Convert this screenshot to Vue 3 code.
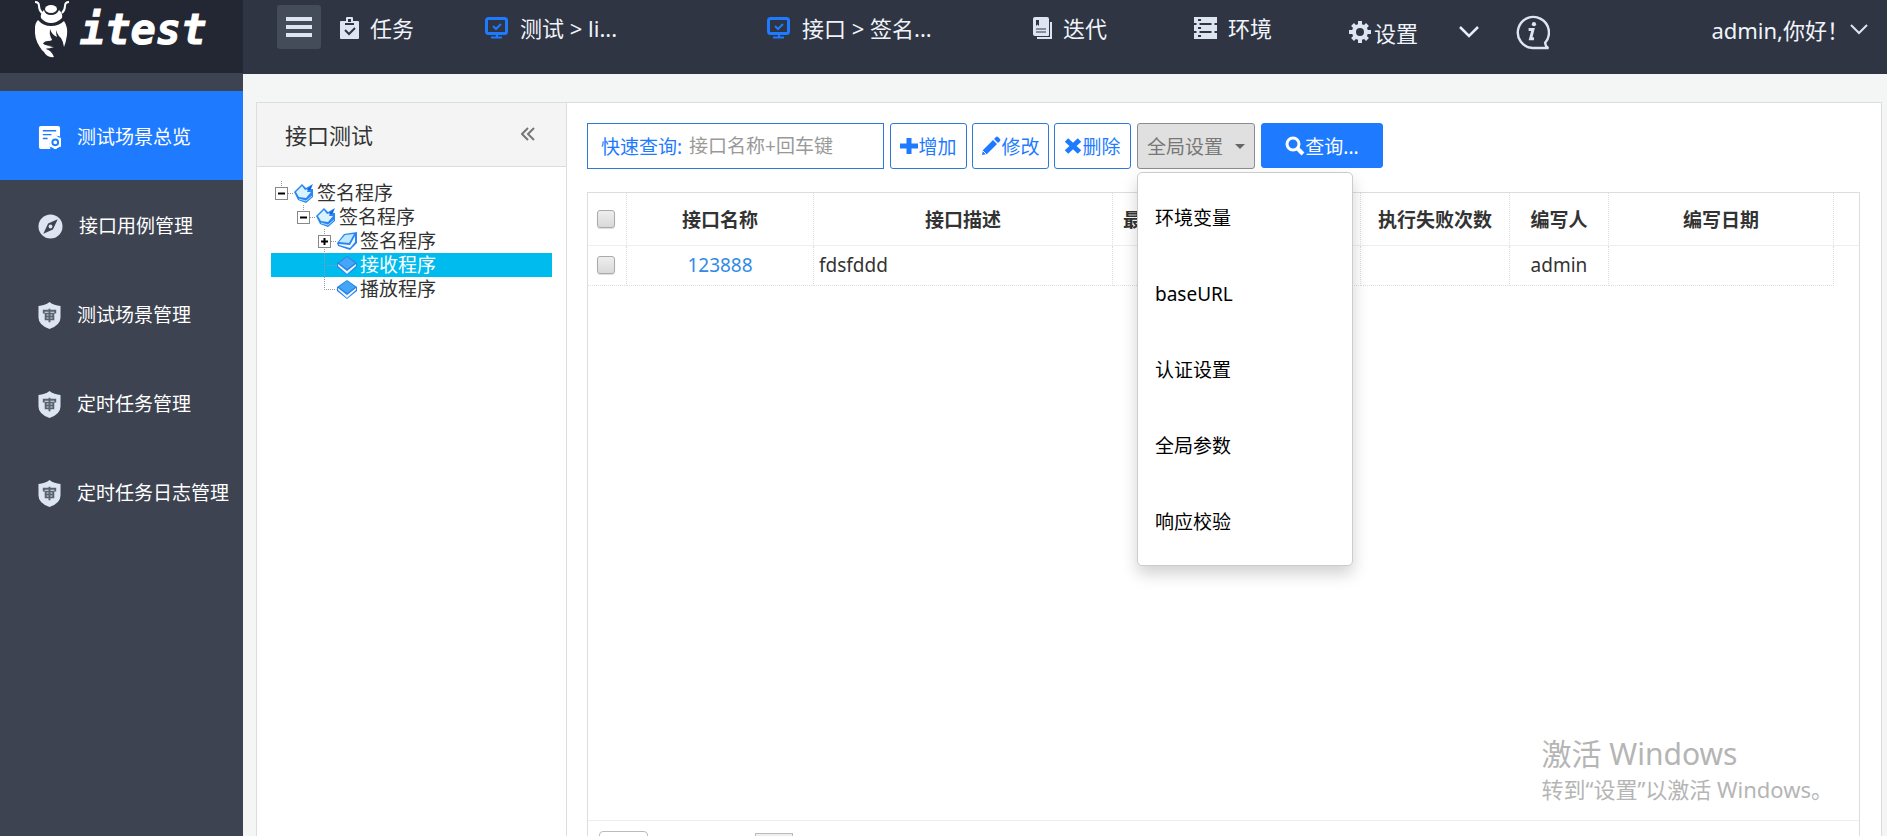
<script setup>
import { ref } from 'vue'

const menu = [
  { label: '测试场景总览', icon: 'doc', active: true },
  { label: '接口用例管理', icon: 'compass' },
  { label: '测试场景管理', icon: 'shield' },
  { label: '定时任务管理', icon: 'shield' },
  { label: '定时任务日志管理', icon: 'shield' },
]

const tree = [
  { label: '签名程序', level: 0, icon: 'open', toggle: '-' },
  { label: '签名程序', level: 1, icon: 'open', toggle: '-' },
  { label: '签名程序', level: 2, icon: 'closed', toggle: '+' },
  { label: '接收程序', level: 2, icon: 'leaf', selected: true },
  { label: '播放程序', level: 2, icon: 'leaf', last: true },
]

const settings = ['环境变量', 'baseURL', '认证设置', '全局参数', '响应校验']
const rows = [{ name: '123888', desc: 'fdsfddd', author: 'admin' }]
const keyword = ref('')
</script>

<template>
  <div class="app">
    <aside class="side">
      <a class="brand" href="#" aria-label="itest">
        <svg class="bug" viewBox="0 0 36 58" aria-hidden="true">
          <path d="M1 2q4 0 4 4t3 7M35 2q-4 0-4 4t-3 7" fill="none" stroke="#fff" stroke-width="2" />
          <ellipse cx="17" cy="9" rx="6" ry="4" fill="#fff" />
          <path d="M10 10q-4 3-3 8 4 5 10 5t11-5q1-5-3-8-2 5-8 5t-7-5z" fill="#fff" />
          <path d="M4 20q5 6 13 6 8 0 13-5 4 6 3 14-1 7-3 12-1-6-3-9-3-2-5-8 0 4 1 7-5-2-7-8-1 5 1 9 3 3-3 3-4 0-5 3 4 3 11 3-9 3-14 0Q0 39 1 28q0-5 3-8z" fill="#fff" />
          <path d="M4 41q6 5 14 5-5 1-6 3 5 1 8 8-7 1-10-5-5-4-6-11z" fill="#fff" />
        </svg>
        <span class="brand-name">itest</span>
      </a>
      <nav class="menu">
        <a v-for="m in menu" :key="m.label" href="#" class="menu-item" :class="{ active: m.active }">
          <svg v-if="m.icon === 'doc'" class="menu-icon" viewBox="0 0 24 26" aria-hidden="true">
            <path d="M3 1h18a2 2 0 0 1 2 2v9a8 8 0 0 0-11 9l1 4H3a2 2 0 0 1-2-2V3a2 2 0 0 1 2-2z" fill="#fff" />
            <path d="M5 6h14M5 10h9M5 14h5" stroke="#1e7bff" stroke-width="1.500" />
            <circle cx="18" cy="18" r="5" fill="none" stroke="#fff" stroke-width="3" />
            <path d="M18 11v14M12 14l12 8M12 22l12-8" stroke="#fff" stroke-width="3" />
            <circle cx="18" cy="18" r="3" fill="#fff" stroke="#1e7bff" stroke-width="2" />
          </svg>
          <svg v-else-if="m.icon === 'compass'" class="menu-icon wide" viewBox="0 0 26 26" aria-hidden="true">
            <circle cx="13" cy="13" r="12.500" fill="#dce5f0" />
            <path d="M20.500 5.500L15.500 16 5.500 20.500 10.500 10z" fill="#3d4350" />
            <circle cx="13" cy="13" r="2" fill="#dce5f0" />
          </svg>
          <svg v-else class="menu-icon" viewBox="0 0 24 28" aria-hidden="true">
            <path d="M12 0q5 4 11.500 4v12q0 8-11.500 12Q.500 24 .500 16V4Q7 4 12 0z" fill="#dce5f0" />
            <path d="M6 12V9h12v3M12 7v14M8 12h8v6H8zM8 15h8" fill="none" stroke="#596271" stroke-width="2" />
          </svg>
          <span>{{ m.label }}</span>
        </a>
      </nav>
    </aside>

    <div class="main">
      <header class="top">
        <button class="burger" type="button" aria-label="菜单"><i></i><i></i><i></i></button>
        <nav class="nav">
          <a href="#" class="nav-item task">
            <svg width="19" height="22" viewBox="0 0 19 22" aria-hidden="true">
              <path d="M1 4h5V1q0-1 1-1h5q1 0 1 1v3h5q1 0 1 1v16q0 1-1 1H1q-1 0-1-1V5q0-1 1-1z" fill="#dce5f0" />
              <path d="M8 2h3v3H8z" fill="#2f3543" />
              <path d="M5 7h9M5 13l4 4 6-6" fill="none" stroke="#2f3543" stroke-width="2" />
            </svg>
            <span>任务</span>
          </a>
          <a href="#" class="nav-item test">
            <svg width="24" height="22" viewBox="0 0 24 22" aria-hidden="true">
              <rect x="1.500" y="1.500" width="20" height="15" rx="2" fill="none" stroke="#1e7bff" stroke-width="3" />
              <path d="M6 20.500h11M12 17v3M8 9l3 3 5-5" fill="none" stroke="#1e7bff" stroke-width="2" />
            </svg>
            <span>测试 &gt; li...</span>
          </a>
          <a href="#" class="nav-item api">
            <svg width="24" height="22" viewBox="0 0 24 22" aria-hidden="true">
              <rect x="1.500" y="1.500" width="20" height="15" rx="2" fill="none" stroke="#1e7bff" stroke-width="3" />
              <path d="M6 20.500h11M12 17v3M8 9l3 3 5-5" fill="none" stroke="#1e7bff" stroke-width="2" />
            </svg>
            <span>接口 &gt; 签名...</span>
          </a>
          <a href="#" class="nav-item iter">
            <svg width="19" height="22" viewBox="0 0 19 22" aria-hidden="true">
              <path d="M2 0h12q2 0 2 2v16q0 1-1 1H2q-2 0-2-2V2q0-2 2-2z" fill="#dce5f0" />
              <path d="M18 5v16H4" fill="none" stroke="#dce5f0" stroke-width="2" />
              <path d="M3 3h3v6L4.500 7.500 3 9z" fill="#2f3543" />
              <path d="M3 12h10M3 15h10" fill="none" stroke="#2f3543" stroke-width="1" />
            </svg>
            <span>迭代</span>
          </a>
          <a href="#" class="nav-item env">
            <svg width="23" height="22" viewBox="0 0 23 22" aria-hidden="true">
              <path d="M0 0h23v6H0zM0 8h23v6H0zM0 16h23v6H0z" fill="#dce5f0" />
              <path d="M4 6v2M19 6v2M4 14v2M19 14v2" stroke="#dce5f0" stroke-width="3" />
              <path d="M4 3h3M4 11h3M4 19h3" stroke="#2f3543" stroke-width="2" />
            </svg>
            <span>环境</span>
          </a>
        </nav>
        <div class="tools">
          <a href="#" class="nav-item set">
            <svg width="22" height="22" viewBox="0 0 22 22" aria-hidden="true">
              <circle cx="11" cy="11" r="6" fill="none" stroke="#dce5f0" stroke-width="4" />
              <path d="M11 0v4M11 18v4M0 11h4M18 11h4M3.500 3.500l3 3M15.500 15.500l3 3M18.500 3.500l-3 3M6.500 15.500l-3 3" stroke="#dce5f0" stroke-width="4" />
            </svg>
            <span>设置</span>
          </a>
          <button class="icon-btn more" type="button" aria-label="更多">
            <svg width="20" height="12" viewBox="0 0 20 12"><path d="M1 1l9 9 9-9" fill="none" stroke="#e8eef5" stroke-width="2.500" /></svg>
          </button>
          <button class="icon-btn" type="button" aria-label="帮助">
            <svg width="35" height="36" viewBox="0 0 36 36">
              <path d="M31 29a16 16 0 1 0-13 5.500h16.500q-3-1-3.500-5.500z" fill="none" stroke="#dce5f0" stroke-width="2.500" />
              <circle cx="19.500" cy="10" r="2.200" fill="#dce5f0" />
              <path d="M14 15.500h4.500l-2.500 9.500h3.500" fill="none" stroke="#dce5f0" stroke-width="3" />
            </svg>
          </button>
        </div>
        <button class="user" type="button">
          <span>admin,你好！</span>
          <svg width="18" height="11" viewBox="0 0 18 11" aria-hidden="true"><path d="M1 1l8 8 8-8" fill="none" stroke="#dce5f0" stroke-width="2" /></svg>
        </button>
      </header>

      <main class="work">
        <section class="tree-panel">
          <div class="tree-head">
            <h2>接口测试</h2>
            <button class="icon-btn" type="button" aria-label="收起">
              <svg width="14" height="14" viewBox="0 0 14 14"><path d="M7 1L1 7l6 6M13 1L7 7l6 6" fill="none" stroke="#777" stroke-width="2" /></svg>
            </button>
          </div>
          <ul class="tree">
            <li v-for="(n, i) in tree" :key="i" :class="['node', 'lv' + n.level, { selected: n.selected }]">
              <svg class="joint" viewBox="0 0 20 24" aria-hidden="true">
                <template v-if="n.toggle">
                  <path d="M7.500 0v6M14 12.500h6" stroke="#999" stroke-dasharray="1 1" />
                  <path v-if="n.toggle === '+'" d="M7.500 18v6" stroke="#999" stroke-dasharray="1 1" />
                  <rect x="1.500" y="6.500" width="12" height="12" fill="#fff" stroke="#888" />
                  <path d="M4 12.500h7" stroke="#000" stroke-width="2" />
                  <path v-if="n.toggle === '+'" d="M7.500 9v7" stroke="#000" stroke-width="2" />
                </template>
                <path v-else :d="n.last ? 'M7.500 0v12.500h12' : 'M7.500 0v24M7 12.500h13'" fill="none" stroke="#999" stroke-dasharray="1 1" />
              </svg>
              <svg class="book" viewBox="0 0 20 20" aria-hidden="true">
                <template v-if="n.icon === 'open'">
                  <path d="M0 9L8 1l4 4 7-4-2 5 2 0v8l-7 6-8-3z" fill="#2b86f0" />
                  <path d="M2 9l6-6 3 4 3-1-1 3 4 0-5 6-7-1z" fill="#d9f3ff" />
                  <path d="M13 7l5-5-2 5z" fill="#0a5fd8" />
                  <path d="M5 16l7 2 6-5" fill="none" stroke="#a5dcff" />
                </template>
                <template v-else-if="n.icon === 'closed'">
                  <path d="M0 12L7 3l13-2v11l-7 7-12-4z" fill="#2b86f0" />
                  <path d="M2 11l6-7 9-1-5 9z" fill="#bfe8ff" />
                  <path d="M2 13l11 1 5-9v6l-5 6-11-3z" fill="#f2fbff" />
                </template>
                <template v-else>
                  <path d="M0 8l10-7 10 7v4l-10 8L0 12z" fill="#2a83e8" />
                  <path d="M1 9l9 7 9-7v2l-9 8-9-8z" fill="#e9f6ff" />
                  <path d="M2 8l8-6 8 6-8 6z" fill="#45a6f7" />
                </template>
              </svg>
              <span>{{ n.label }}</span>
            </li>
          </ul>
        </section>

        <section class="content">
          <div class="bar">
            <div class="quick">
              <label for="quick">快速查询:</label>
              <input id="quick" v-model="keyword" type="text" placeholder="接口名称+回车键" />
            </div>
            <button class="btn" type="button">
              <svg width="18" height="18" viewBox="0 0 18 18" aria-hidden="true"><path d="M6.500 1h5v5.500H18v5h-6.500V17h-5v-5.500H0v-5h6.500z" fill="#1e7bff" /></svg>增加
            </button>
            <button class="btn" type="button">
              <svg width="20" height="20" viewBox="0 0 20 20" aria-hidden="true"><path d="M1 19l1-5L12 4l4 4L6 18zM13 3l2-2q1-1 2 0l2 2q1 1 0 2l-2 2z" fill="#1e7bff" /><path d="M2 15l3 3" stroke="#fff" /></svg>修改
            </button>
            <button class="btn" type="button">
              <svg width="18" height="18" viewBox="0 0 18 18" aria-hidden="true"><path d="M2.500 3l13 12M15.500 3l-13 12" stroke="#1e7bff" stroke-width="5" /></svg>删除
            </button>
            <div class="drop">
              <button class="btn grey" type="button" aria-haspopup="true" aria-expanded="true">全局设置<i class="caret"></i></button>
              <ul class="drop-menu">
                <li v-for="s in settings" :key="s"><a href="#">{{ s }}</a></li>
              </ul>
            </div>
            <button class="btn primary" type="button">
              <svg width="20" height="20" viewBox="0 0 20 20" aria-hidden="true"><circle cx="8" cy="8" r="6" fill="none" stroke="#fff" stroke-width="3" /><path d="M12 12l6 6" stroke="#fff" stroke-width="4" /></svg>查询...
            </button>
          </div>

          <div class="grid">
            <div class="grid-body">
              <table>
                <colgroup>
                  <col class="c-check" /><col class="c-name" /><col class="c-desc" /><col class="c-last" />
                  <col class="c-fail" /><col class="c-author" /><col class="c-date" /><col />
                </colgroup>
                <thead>
                  <tr>
                    <th><input type="checkbox" aria-label="全选" /></th>
                    <th>接口名称</th>
                    <th>接口描述</th>
                    <th class="left">最</th>
                    <th>执行失败次数</th>
                    <th>编写人</th>
                    <th>编写日期</th>
                    <th></th>
                  </tr>
                </thead>
                <tbody>
                  <tr v-for="r in rows" :key="r.name">
                    <td><input type="checkbox" :aria-label="r.name" /></td>
                    <td><a href="#">{{ r.name }}</a></td>
                    <td class="desc">{{ r.desc }}</td>
                    <td></td>
                    <td></td>
                    <td>{{ r.author }}</td>
                    <td></td>
                    <td></td>
                  </tr>
                </tbody>
              </table>
            </div>
            <div class="pager">
              <select aria-label="每页条数"></select>
              <input type="text" aria-label="页码" />
            </div>
          </div>
        </section>
      </main>
    </div>

    <div class="watermark">
      <p class="wm-title">激活 Windows</p>
      <p class="wm-text">转到“设置”以激活 Windows。</p>
    </div>
  </div>
</template>

<style>
body {
  margin: 0;
  overflow: hidden;
}
</style>

<style scoped>
.app {
  position: relative;
  display: flex;
  height: 100vh;
  overflow: hidden;
  background: #f4f5f5;
  color: #333;
  font-family: "Noto Sans", "Noto Sans CJK SC", sans-serif;
  font-size: 19px;
  font-weight: 400;
}
.app *,
.app *::before {
  box-sizing: border-box;
}
a {
  color: inherit;
  text-decoration: none;
}
button,
input,
select {
  font: inherit;
}
button {
  border: 0;
  padding: 0;
  background: none;
  color: inherit;
  cursor: pointer;
}
svg {
  flex: none;
}

.side {
  flex: 0 0 243px;
  background: #3d4350;
}
.brand {
  display: flex;
  gap: 10px;
  height: 73px;
  padding-left: 34px;
  background: #232733;
  color: #fff;
}
.bug {
  width: 36px;
  height: 58px;
}
.brand-name {
  font: italic bold 42px/60px "DejaVu Sans Mono", monospace;
  -webkit-text-stroke: 1px #fff;
}
.menu {
  padding-top: 18px;
}
.menu-item {
  display: flex;
  align-items: center;
  gap: 16px;
  height: 89px;
  padding-left: 38px;
  color: #fff;
  white-space: nowrap;
}
.menu-item.active {
  background: #1e7bff;
}
.menu-icon {
  width: 23px;
  height: 27px;
  margin-top: 4px;
}
.menu-icon.wide {
  width: 25px;
}

.main {
  flex: 1;
  min-width: 0;
  display: flex;
  flex-direction: column;
}
.top {
  display: flex;
  align-items: flex-start;
  flex: 0 0 74px;
  padding: 0 19px 0 34px;
  background: #2f3543;
  color: #f0f4fa;
  font-size: 22px;
  white-space: nowrap;
}
.burger {
  display: flex;
  flex-direction: column;
  align-items: center;
  justify-content: center;
  gap: 4px;
  width: 44px;
  height: 44px;
  margin: 5px 19px 0 0;
  border-radius: 3px;
  background: #454c59;
}
.burger i {
  width: 26px;
  height: 4px;
  background: #dce5f0;
}
.nav,
.tools {
  display: flex;
  align-items: center;
  height: 56px;
}
.nav span {
  margin-top: -3px;
}
.tools {
  height: 64px;
}
.nav-item {
  display: flex;
  align-items: center;
  gap: 11px;
}
.task {
  width: 145px;
}
.test {
  width: 282px;
}
.api {
  width: 266px;
}
.iter {
  width: 161px;
}
.env {
  width: 155px;
}
.set {
  gap: 3px;
  width: 110px;
}
.icon-btn {
  display: flex;
}
.more {
  width: 56px;
}
.user {
  display: flex;
  align-items: center;
  gap: 1px;
  height: 58px;
  margin-left: auto;
}

.work {
  display: flex;
  flex: 1;
  min-height: 0;
  margin: 28px 5px -40px 13px;
  border: 1px solid #ddd;
  background: #fff;
}
.tree-panel {
  flex: 0 0 310px;
  border-right: 1px solid #ddd;
}
.tree-head {
  display: flex;
  align-items: center;
  justify-content: space-between;
  height: 64px;
  padding: 0 31px 2px 28px;
  border-bottom: 1px solid #ddd;
  background: #f4f4f4;
}
.tree-head h2 {
  margin: 0;
  font-size: 22px;
  font-weight: 400;
}
.tree {
  margin: 0;
  padding: 14px;
  list-style: none;
}
.node {
  display: flex;
  align-items: center;
  height: 24px;
  line-height: 24px;
  padding-left: 3px;
}
.node.lv1 {
  padding-left: 25px;
}
.node.lv2 {
  padding-left: 46px;
}
.node.selected {
  background: #00bbee;
  color: #fff;
}
.joint {
  width: 20px;
  height: 24px;
}
.book {
  width: 20px;
  height: 20px;
  margin-right: 3px;
}

.content {
  flex: 1;
  min-width: 0;
  display: flex;
  flex-direction: column;
  padding: 20px 21px 0 20px;
}
.bar {
  display: flex;
  gap: 5px;
  margin-bottom: 23px;
}
.quick {
  display: flex;
  align-items: center;
  gap: 7px;
  width: 297px;
  height: 46px;
  margin-right: 1px;
  padding: 0 13px;
  border: 1px solid #2b7bd6;
}
.quick label {
  color: #1e7bff;
  white-space: nowrap;
}
.quick input {
  flex: 1;
  min-width: 0;
  border: 0;
  padding: 0;
  outline: 0;
  background: none;
}
.quick input::placeholder {
  color: #999;
  opacity: 1;
}
.btn {
  display: flex;
  align-items: center;
  justify-content: center;
  width: 77px;
  height: 46px;
  border: 1px solid #2b7bd6;
  border-radius: 3px;
  background: #fff;
  color: #1e7bff;
  white-space: nowrap;
}
.btn.grey {
  gap: 12px;
  width: 118px;
  border-color: #8c8c8c;
  background: #e0e0e0;
  color: #777;
}
.caret {
  border: 5px solid transparent;
  border-top-color: #666;
  border-bottom: 0;
}
.btn.primary {
  width: 122px;
  height: 45px;
  border-color: #1e7bff;
  background: #1e7bff;
  color: #fff;
}
.drop {
  position: relative;
  margin: 0 1px;
}
.drop-menu {
  position: absolute;
  top: 49px;
  left: 0;
  z-index: 2;
  width: 216px;
  margin: 0;
  padding: 7px 0 5px;
  border: 1px solid #ccc;
  border-radius: 5px;
  background: #fff;
  box-shadow: 0 8px 16px rgba(0, 0, 0, 0.18);
  list-style: none;
}
.drop-menu a {
  display: block;
  padding: 0 17px;
  color: #000;
  line-height: 76px;
}

.grid {
  flex: 1;
  display: flex;
  flex-direction: column;
  border: 1px solid #ddd;
}
.grid-body {
  flex: 1;
}
table {
  width: 100%;
  table-layout: fixed;
  border-collapse: separate;
  border-spacing: 0;
}
.c-check {
  width: 39px;
}
.c-name {
  width: 187px;
}
.c-desc {
  width: 299px;
}
.c-last {
  width: 248px;
}
.c-fail {
  width: 149px;
}
.c-author {
  width: 99px;
}
.c-date {
  width: 225px;
}
th,
td {
  padding: 0;
  border-right: 1px dotted #ddd;
  text-align: center;
  white-space: nowrap;
}
th {
  height: 53px;
  border-bottom: 1px solid #eee;
  font-weight: 700;
}
td {
  height: 40px;
  padding-bottom: 2px;
  border-bottom: 1px dotted #ddd;
}
th:last-child {
  border-right: 0;
}
td:last-child {
  border: 0;
}
th.left {
  padding-left: 10px;
  text-align: left;
}
td.desc {
  padding-left: 5px;
  text-align: left;
}
td a {
  color: #2f8be6;
}
input[type="checkbox"] {
  display: block;
  width: 18px;
  height: 18px;
  margin: 0 9px;
  appearance: none;
  border: 1px solid #aaa;
  border-radius: 3px;
  background: linear-gradient(#eee, #d9d9d9);
  box-shadow: 0 1px 1px #ddd;
}
.pager {
  display: flex;
  align-items: flex-start;
  gap: 107px;
  height: 54px;
  padding: 10px 11px;
  border-top: 1px solid #eee;
}
.pager select {
  width: 49px;
  height: 34px;
  appearance: none;
  border: 1px solid #bbb;
  border-radius: 4px;
  background: #fff;
}
.pager input {
  width: 38px;
  height: 30px;
  margin-top: 2px;
  border: 1px solid #bbb;
  background: #eee;
}

.watermark {
  position: absolute;
  right: 54px;
  bottom: 31px;
  z-index: 3;
  color: #b5b5b5;
  pointer-events: none;
}
.watermark p {
  margin: 0;
  white-space: nowrap;
}
.wm-title {
  font-size: 30px;
  line-height: 38px;
}
.wm-text {
  font-size: 22px;
  line-height: 32px;
}
</style>
